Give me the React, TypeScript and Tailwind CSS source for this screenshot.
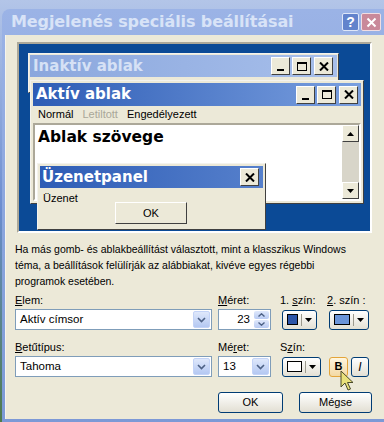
import React from 'react'

const tahoma = "font-['Liberation_Sans',Arial,sans-serif]"
const titleFont = "font-['DejaVu_Sans',Verdana,sans-serif] font-bold"

const Caption = ({ kind }: { kind: 'min' | 'max' | 'close' }) => (
    <div className="w-[19px] h-[18px] bg-[#ece9d8] border border-t-white border-l-white border-r-[#404040] border-b-[#404040] flex items-center justify-center">
        {kind === 'min' && <div className="w-[7px] h-[2px] bg-black mt-[8px]" />}
        {kind === 'max' && <div className="w-[10px] h-[9px] border border-black border-t-2" />}
        {kind === 'close' && (
            <svg width="10" height="9" viewBox="0 0 10 9">
                <path d="M1 0.5 L9 8.5 M9 0.5 L1 8.5" stroke="#000" strokeWidth="2" />
            </svg>
        )}
    </div>
)

const DropArrow = () => (
    <div className="w-[17px] h-[17px] rounded-[2px] bg-gradient-to-b from-[#dfe8fb] to-[#b4c8f2] border border-[#c3d3f7] flex items-center justify-center">
        <svg width="9" height="6" viewBox="0 0 9 6">
            <path d="M1 1 L4.5 4.5 L8 1" stroke="#4d6185" strokeWidth="1.6" fill="none" />
        </svg>
    </div>
)

const ColorButton = ({ color, w }: { color: string; w: string }) => (
    <div className={`${w} h-[20px] rounded-[3px] border border-[#003c74] bg-gradient-to-b from-white to-[#e3e0d4] flex items-center px-[4px] gap-[3px]`}>
        <div className="flex-1 h-[11px] border border-black" style={{ background: color }} />
        <div className="w-px h-[12px] bg-[#9c9a8e]" />
        <svg width="7" height="4" viewBox="0 0 7 4"><path d="M0 0 H7 L3.5 4Z" fill="#000" /></svg>
    </div>
)

const XpButton = ({ label, w }: { label: string; w: string }) => (
    <div className={`${w} h-[21px] rounded-[3px] border border-[#003c74] bg-gradient-to-b from-white to-[#e2dfd3] flex items-center justify-center text-[11px] text-black`}>
        {label}
    </div>
)

export default function App() {
    return (
        <div className={`w-[384px] h-[422px] overflow-hidden relative bg-gradient-to-b from-[#b3c5e8] via-[#6b8ccf] to-[#4f7a4a] ${tahoma}`}>
            <div className="ml-[2px] mt-[9px] w-[390px] rounded-tl-[8px] bg-gradient-to-b from-[#9bb3e6] to-[#7c99d6] pl-[3px] pb-[3px]">
                {/* title bar */}
                <div className="h-[26px] flex items-center pr-[11px]">
                    <div className={`flex-1 pl-[6px] text-[16px] leading-none text-[#d8e3f7] ${titleFont} tracking-[-0.1px]`}>Megjelenés speciális beállításai</div>
                    <div className="w-[17px] h-[18px] rounded-[2px] border border-[#dfe7f8] bg-[#6283cc] flex items-center justify-center text-white font-bold text-[14px] leading-none">?</div>
                    <div className="ml-[2px] w-[20px] h-[18px] rounded-[2px] border border-[#f1dde2] bg-[#c9899a] flex items-center justify-center">
                        <svg width="11" height="11" viewBox="0 0 11 11"><path d="M1.5 1.5 L9.5 9.5 M9.5 1.5 L1.5 9.5" stroke="#fff" strokeWidth="2" /></svg>
                    </div>
                </div>

                {/* body */}
                <div className="h-[384px] bg-[#ece9d8] border-l border-[#f5f4ee] flex flex-col">
                    {/* preview */}
                    <div className="mt-[7px] ml-[11px] w-[355px] h-[191px] border-2 border-t-[#aca899] border-l-[#aca899] border-r-white border-b-white bg-[#0b4a96] relative">
                        {/* inactive window */}
                        <div className="absolute left-[9px] top-[9px] w-[311px] h-[40px] bg-[#ece9d8] border border-t-[#f4f3ee] border-l-[#f4f3ee] border-r-[#404040] border-b-[#404040] p-[1px]">
                            <div className="h-[22px] bg-gradient-to-r from-[#8ba7dd] to-[#a7bfeb] flex items-center pl-[3px] pr-[4px]">
                                <div className={`flex-1 text-[15px] leading-none text-[#d6e1f5] ${titleFont}`}>Inaktív ablak</div>
                                <Caption kind="min" />
                                <div className="ml-[2px]"><Caption kind="max" /></div>
                                <div className="ml-[3px]"><Caption kind="close" /></div>
                            </div>
                        </div>

                        {/* active window */}
                        <div className="absolute left-[11px] top-[36px] w-[334px] h-[124px] bg-[#ece9d8] border border-t-[#f4f3ee] border-l-[#f4f3ee] border-r-[#404040] border-b-[#404040] p-[2px] flex flex-col">
                            <div className="h-[23px] bg-gradient-to-r from-[#2d5cb5] to-[#7a9fdf] flex items-center pl-[3px] pr-[3px]">
                                <div className={`flex-1 text-[15px] leading-none text-white ${titleFont}`}>Aktív ablak</div>
                                <Caption kind="min" />
                                <div className="ml-[2px]"><Caption kind="max" /></div>
                                <div className="ml-[3px]"><Caption kind="close" /></div>
                            </div>
                            <div className="h-[17px] flex items-center gap-[9px] pl-[5px] text-[11px] text-black">
                                <span>Normál</span>
                                <span className="text-[#a9a799]">Letiltott</span>
                                <span>Engedélyezett</span>
                            </div>
                            <div className="flex-1 flex border-2 border-t-[#aca899] border-l-[#aca899] border-r-white border-b-white">
                                <div className="flex-1 bg-white pl-[3px] pt-[5px]">
                                    <div className={`text-[15.5px] leading-none text-black ${titleFont}`}>Ablak szövege</div>
                                </div>
                                <div className="w-[17px] bg-[#d8d5c9] flex flex-col justify-between">
                                    <div className="h-[17px] bg-[#ece9d8] border border-t-white border-l-white border-r-[#404040] border-b-[#404040] flex items-center justify-center">
                                        <svg width="7" height="4" viewBox="0 0 7 4"><path d="M3.5 0 L7 4 H0Z" fill="#000" /></svg>
                                    </div>
                                    <div className="h-[17px] bg-[#ece9d8] border border-t-white border-l-white border-r-[#404040] border-b-[#404040] flex items-center justify-center">
                                        <svg width="7" height="4" viewBox="0 0 7 4"><path d="M0 0 H7 L3.5 4Z" fill="#000" /></svg>
                                    </div>
                                </div>
                            </div>
                        </div>

                        {/* message box */}
                        <div className="absolute left-[18px] top-[119px] w-[229px] h-[67px] bg-[#ece9d8] border border-t-[#f4f3ee] border-l-[#f4f3ee] border-r-[#404040] border-b-[#404040] p-[2px] flex flex-col">
                            <div className="h-[22px] bg-gradient-to-r from-[#2d5cb5] to-[#5680cc] flex items-center pl-[2px] pr-[4px]">
                                <div className={`flex-1 text-[15px] leading-none text-white ${titleFont}`}>Üzenetpanel</div>
                                <Caption kind="close" />
                            </div>
                            <div className="text-[11px] leading-none text-black pl-[3px] pt-[5px]">Üzenet</div>
                            <div className="ml-[75px] mt-[-2px] w-[72px] h-[22px] border border-t-white border-l-white border-r-[#404040] border-b-[#404040] flex items-center justify-center text-[11px] text-black">OK</div>
                        </div>
                    </div>

                    {/* explanation */}
                    <div className="mt-[8px] ml-[9px] text-[10.5px] leading-[16px] text-black w-[350px]">
                        Ha más gomb- és ablakbeállítást választott, mint a klasszikus Windows téma, a beállítások felülírják az alábbiakat, kivéve egyes régebbi programok esetében.
                    </div>

                    {/* row 1 */}
                    <div className="mt-[6px] ml-[9px] flex text-[11px] leading-none text-black h-[12px]">
                        <span className="w-[203px]"><u>E</u>lem:</span>
                        <span className="w-[62px]"><u>M</u>éret:</span>
                        <span className="w-[47px]">1. <u>s</u>zín:</span>
                        <span><u>2</u>. szín :</span>
                    </div>
                    <div className="mt-[2px] ml-[9px] flex items-center h-[21px]">
                        <div className="w-[197px] h-[21px] bg-white border border-[#7f9db9] flex items-center pl-[4px] pr-[1px] text-[11.5px] text-black">
                            <span className="flex-1">Aktív címsor</span>
                            <DropArrow />
                        </div>
                        <div className="ml-[6px] w-[53px] h-[21px] bg-white border border-[#7f9db9] flex items-center pr-[1px] text-[11.5px] text-black">
                            <span className="flex-1 text-right pr-[4px]">23</span>
                            <div className="w-[15px] h-[17px] flex flex-col gap-px">
                                <div className="flex-1 rounded-[2px] bg-gradient-to-b from-[#dfe8fb] to-[#b9cbf3] flex items-center justify-center">
                                    <svg width="7" height="4" viewBox="0 0 7 4"><path d="M0.5 3.5 L3.5 0.8 L6.5 3.5" stroke="#4d6185" strokeWidth="1.4" fill="none" /></svg>
                                </div>
                                <div className="flex-1 rounded-[2px] bg-gradient-to-b from-[#dfe8fb] to-[#b9cbf3] flex items-center justify-center">
                                    <svg width="7" height="4" viewBox="0 0 7 4"><path d="M0.5 0.5 L3.5 3.2 L6.5 0.5" stroke="#4d6185" strokeWidth="1.4" fill="none" /></svg>
                                </div>
                            </div>
                        </div>
                        <div className="ml-[11px]"><ColorButton color="#2c55a8" w="w-[35px]" /></div>
                        <div className="ml-[12px]"><ColorButton color="#6b95d9" w="w-[40px]" /></div>
                    </div>

                    {/* row 2 */}
                    <div className="mt-[12px] ml-[9px] flex text-[11px] leading-none text-black h-[12px]">
                        <span className="w-[203px]"><u>B</u>etűtípus:</span>
                        <span className="w-[62px]">Mé<u>r</u>et:</span>
                        <span>S<u>z</u>ín:</span>
                    </div>
                    <div className="mt-[2px] ml-[9px] flex items-center h-[21px]">
                        <div className="w-[197px] h-[21px] bg-white border border-[#7f9db9] flex items-center pl-[4px] pr-[1px] text-[11.5px] text-black">
                            <span className="flex-1">Tahoma</span>
                            <DropArrow />
                        </div>
                        <div className="ml-[6px] w-[53px] h-[21px] bg-white border border-[#7f9db9] flex items-center pl-[4px] pr-[1px] text-[11.5px] text-black">
                            <span className="flex-1">13</span>
                            <DropArrow />
                        </div>
                        <div className="ml-[11px]"><ColorButton color="#ffffff" w="w-[39px]" /></div>
                        <div className="ml-[8px] w-[19px] h-[20px] rounded-[3px] border border-[#e4a53a] bg-gradient-to-b from-[#fff6df] to-[#f3d9a4] flex items-center justify-center text-[11px] font-bold text-black">B</div>
                        <div className="ml-[3px] w-[18px] h-[20px] rounded-[3px] border border-[#003c74] bg-gradient-to-b from-white to-[#e3e0d4] flex items-center justify-center text-[12px] italic text-black">I</div>
                    </div>

                    {/* buttons */}
                    <div className="mt-[15px] ml-[212px] flex gap-[16px]">
                        <XpButton label="OK" w="w-[65px]" />
                        <XpButton label="Mégse" w="w-[73px]" />
                    </div>
                </div>
            </div>

            {/* mouse cursor */}
            <svg className="absolute left-[340px] top-[370px]" width="14" height="22" viewBox="0 0 14 22">
                <path d="M1 1 L1 17 L5 13 L8 20 L10.5 19 L7.5 12.5 L13 12.5 Z" fill="#e8e07a" stroke="#4a4a2a" strokeWidth="1" />
            </svg>
        </div>
    )
}
